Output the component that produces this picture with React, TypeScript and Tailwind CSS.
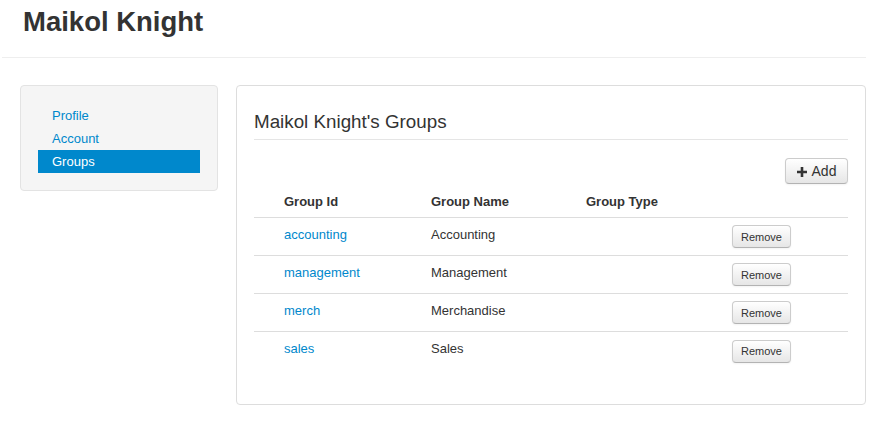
import React from "react";

const rows = [
  { id: "accounting", name: "Accounting" },
  { id: "management", name: "Management" },
  { id: "merch", name: "Merchandise" },
  { id: "sales", name: "Sales" },
];

function Btn({ children, className }: { children: React.ReactNode; className: string }) {
  return (
    <button
      className={
        "flex items-center justify-center rounded-[4px] border border-[#cccccc] border-b-[#b3b3b3] bg-gradient-to-b from-white to-[#e6e6e6] text-[#333] shadow-[inset_0_1px_0_rgba(255,255,255,0.2),0_1px_2px_rgba(0,0,0,0.05)] " +
        className
      }
    >
      {children}
    </button>
  );
}

export default function App() {
  return (
    <div
      className="min-h-[421px] bg-white text-[13px] text-[#333]"
      style={{ fontFamily: '"Liberation Sans", Arial, Helvetica, sans-serif' }}
    >
      <div className="ml-[2px] w-[864px]">
        <div className="border-b border-[#eeeeee] pl-[21px] pt-[4px] pb-[17px]">
          <h1 className="text-[27.5px] font-bold leading-[36px] text-[#333]">Maikol Knight</h1>
        </div>
        <div className="mt-[27px] flex gap-[18px] pl-[18px]">
          <div className="h-[106px] w-[198px] rounded-[4px] border border-[#e3e3e3] bg-[#f5f5f5] px-[17px] pt-[18px]">
            <div className="h-[23px] pl-[14px] leading-[23px] text-[#0088cc]">Profile</div>
            <div className="h-[23px] pl-[14px] leading-[23px] text-[#0088cc]">Account</div>
            <div className="h-[23px] bg-[#0088cc] pl-[14px] leading-[23px] text-white">Groups</div>
          </div>
          <div className="h-[320px] w-[630px] rounded-[4px] border border-[#dddddd] px-[17px] pt-[24px]">
            <div className="border-b border-[#e5e5e5] pb-[5px]">
              <h2 className="text-[18.8px] leading-[24px] text-[#333]">Maikol Knight's Groups</h2>
            </div>
            <div className="mt-[18px] flex justify-end">
              <Btn className="h-[26px] w-[63px] gap-[5px] text-[14px]">
                <svg width="10" height="10" viewBox="0 0 10 10" className="mt-[1px]">
                  <path d="M3.7 0h2.6v3.7H10v2.6H6.3V10H3.7V6.3H0V3.7h3.7z" fill="#333" />
                </svg>
                <span>Add</span>
              </Btn>
            </div>
            <div className="grid h-[34px] grid-cols-[30px_147px_155px_146px_1fr] items-end border-b border-[#dddddd] pb-[5px] font-bold leading-[20px]">
              <div />
              <div>Group Id</div>
              <div>Group Name</div>
              <div>Group Type</div>
              <div />
            </div>
            {rows.map((r, i) => (
              <div
                key={r.id}
                className={
                  "grid h-[38px] grid-cols-[30px_147px_155px_146px_1fr] items-start leading-[20px] " +
                  (i < rows.length - 1 ? "border-b border-[#dddddd]" : "")
                }
              >
                <div />
                <div className="pt-[7px] text-[#0088cc]">{r.id}</div>
                <div className="pt-[7px]">{r.name}</div>
                <div />
                <div className="self-center">
                  <Btn className="h-[23px] w-[59px] text-[11px]">Remove</Btn>
                </div>
              </div>
            ))}
          </div>
        </div>
      </div>
    </div>
  );
}
